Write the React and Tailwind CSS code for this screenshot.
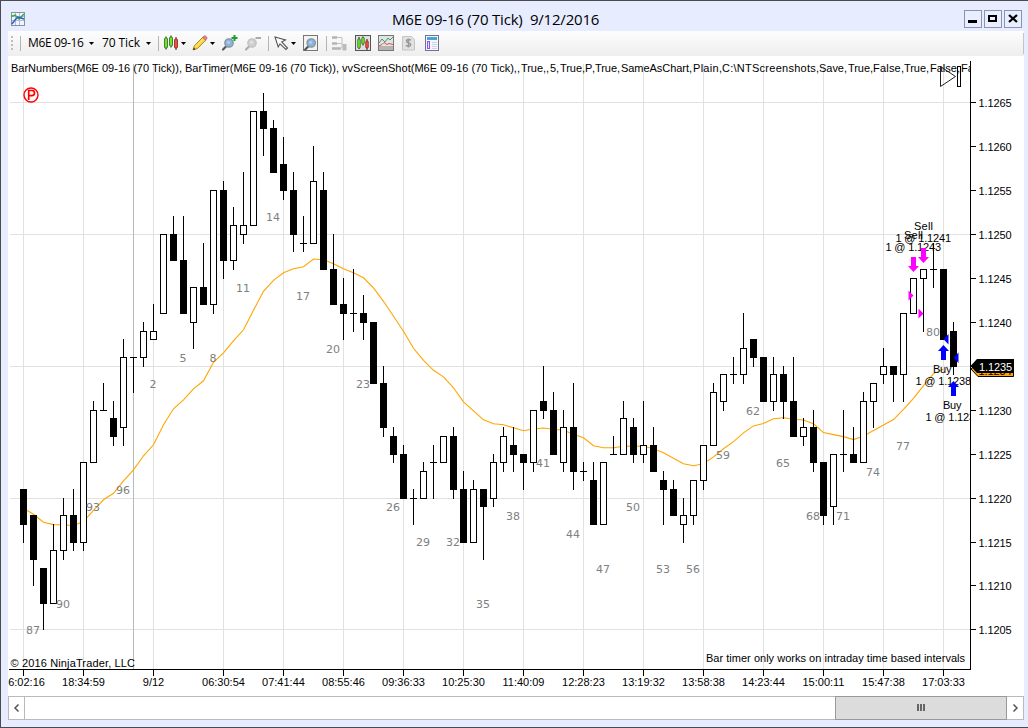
import React from "react";

const price = (t) => Math.round(102 + (65 - t) * 8.79);
const barX = (i) => 23 + i * 10;

// open, high, low, close in ticks above 1.1200
const BARS = [
  [21,21,15,17],[18,18,10,13],[12,12,5,8],[8,17,8,14],[14,20,13,18],[18,21,14,15],[15,24,14,24],[24,31,24,30],[30,33,30,30],[29,31,26,27],
  [28,38,26,36],[36,36,32,36],[36,40,35,39],[38,42,38,39],[41,50,41,50],[50,52,47,47],[47,52,41,41],[40,44,37,44],[44,49,42,42],[42,55,41,55],
  [55,56,45,47],[47,53,46,51],[50,57,49,51],[51,64,51,64],[64,66,59,62],[62,63,57,57],[58,61,54,55],[55,57,48,50],[49,52,48,49],[49,60,49,56],
  [55,57,46,46],[46,50,42,42],[42,45,38,41],[41,46,39,41],[41,43,38,40],[40,40,33,33],[33,35,27,28],[27,28,24,25],[25,26,20,20],[20,21,17,20],
  [20,24,20,23],[24,26,20,24],[24,27,24,27],[27,28,20,21],[21,23,15,15],[15,22,15,21],[21,21,13,19],[20,25,19,24],[24,28,23,27],[26,28,23,25],
  [25,25,21,24],[24,30,23,30],[31,35,29,30],[30,32,25,25],[24,30,23,28],[28,33,21,23],[23,24,22,23],[22,24,17,17],[17,24,17,24],[25,27,25,25],
  [25,31,25,29],[28,29,24,25],[25,31,24,26],[26,28,23,23],[22,23,17,21],[21,22,18,18],[17,20,15,18],[18,22,17,22],[22,26,21,26],[26,33,26,32],
  [31,34,30,34],[34,36,33,34],[34,41,33,37],[38,38,35,36],[36,36,31,31],[31,36,30,34],[34,35,29,31],[31,36,27,27],[27,29,26,28],[28,30,23,24],
  [24,24,17,18],[19,25,17,25],[25,30,23,25],[25,28,24,24],[24,32,24,31],[31,33,28,33],[34,37,33,35],[35,35,31,34],[34,41,31,41],[41,45,41,45],
  [45,46,39,46],[46,49,44,46],[46,46,38,38],[39,40,34,35],
];

const AVERAGE = [
  508, 514, 522, 524.3, 524.5, 525.5, 521, 510, 499.5, 493, 480.5, 469.5, 455.5, 444.5, 424.5, 408.5, 399.5, 388.5, 380.5, 362,
  352.5, 340.5, 329.5, 310, 291, 280, 272.5, 268.5, 266.5, 258.7, 259.5, 263.5, 268.5, 272.5, 277.5, 287.5, 301, 316, 331, 348,
  360, 370, 376.5, 387.5, 401.5, 410.5, 419.5, 423.5, 424.5, 427.5, 430.5, 428.7, 427.7, 429, 430, 434, 437.5, 445.5, 447.5, 447.5,
  446, 445.7, 446, 448.5, 452.5, 458, 463.5, 465.5, 463.5, 456.6, 448.5, 441.3, 432.6, 425.6, 423.3, 418.5, 417.5, 419, 419.7, 423.5,
  432.3, 434.3, 436.3, 439.3, 435.6, 430.3, 424.6, 419.3, 409, 398, 385.3, 373.3, 369,
];

const NUMBERS = [
  [87,33,634],[90,63,608],[93,93,511],[96,123,494],[2,153,388],[5,183,362],[8,213,362],[11,243,292],[14,273,221],[17,303,300],[20,333,353],
  [23,363,388],[26,393,511],[29,423,546],[32,453,546],[35,483,608],[38,513,520],[41,543,467],[44,573,538],[47,603,573],[50,633,511],[53,663,573],
  [56,693,573],[59,723,459],[62,753,415],[65,783,467],[68,813,520],[71,843,520],[74,873,476],[77,903,450],[80,933,336],
];

const TIMES = [
  [23,"16:02:16"],[83,"18:34:59"],[153,"9/12"],[223,"06:30:54"],[283,"07:41:44"],[343,"08:55:46"],[403,"09:36:33"],[463,"10:25:30"],
  [523,"11:40:09"],[583,"12:28:23"],[643,"13:19:32"],[703,"13:58:38"],[763,"14:23:44"],[823,"15:00:11"],[883,"15:47:38"],[943,"17:03:33"],
];

const HEADER = [
  [11,"BarNumbers(M6E 09-16 (70 Tick)),",171],[185,"BarTimer(M6E 09-16 (70 Tick)),",154],[342,"vvScreenShot(M6E 09-16 (70 Tick),,",178],
  [521,"True,,",28],[550,"5,",9],[560,"True,",25],[585,"P,",10],[595,"True,",25],[621,"SameAsChart,",71],[693,"Plain,",29],
  [722,"C:\\NTScreenshots,",97],[819,"Save,",28],[848,"True,",25],[873,"False,",31],[904,"True,",25],[930,"False,",30],[961,"False,",30],
];

const TICKS = [65, 60, 55, 50, 45, 40, 35, 30, 25, 20, 15, 10, 5];

function Candle({ i, bar }) {
  const [o, h, l, c] = bar;
  const x = barX(i);
  const top = price(Math.max(o, c));
  const bottom = price(Math.min(o, c));
  const hi = price(h);
  const lo = price(l);
  return (
    <g>
      <rect x={x} y={hi} width="1" height={lo - hi + 1} fill="#000" />
      {o > c && <rect x={x - 3} y={top} width="7" height={bottom - top + 1} fill="#000" />}
      {o < c && <rect x={x - 2.5} y={top + 0.5} width="6" height={bottom - top} fill="#fff" stroke="#000" />}
      {o === c && <rect x={x - 3} y={top} width="7" height="1" fill="#000" />}
    </g>
  );
}

const DownArrow = ({ x, y }) => (
  <path d={`M${x - 2} ${y}h5v9h3l-5.5 6l-5.5-6h3z`} fill="#f0f" />
);
const UpArrow = ({ x, y }) => (
  <path d={`M${x - 2} ${y + 15}h5v-9h3l-5.5-6l-5.5 6h3z`} fill="#00f" />
);

function Chart() {
  return (
    <svg viewBox="8 56 1016 640" width="1016" height="640" className="block shrink-0" fontFamily='"Liberation Sans", Arial, sans-serif' fontSize="11" fill="#000">
      <defs>
        <clipPath id="plot"><rect x="8" y="56" width="962" height="613" /></clipPath>
      </defs>
      <g fill="#e1e1e1">
        {TICKS.filter((t) => t % 15 === 5).map((t) => <rect key={t} x="10" y={price(t)} width="960" height="1" />)}
        {TIMES.map(([x]) => <rect key={x} x={x} y="64" width="1" height="605" />)}
      </g>
      <rect x="133" y="64" width="1" height="605" fill="#b9b9b9" />
      <g clipPath="url(#plot)">
        <polyline points={AVERAGE.map((y, i) => `${barX(i) + 0.5},${y + 0.3}`).join(" ")} fill="none" stroke="#ffa500" strokeWidth="1.1" />
        {BARS.map((b, i) => <Candle key={i} i={i} bar={b} />)}
        <g fontFamily='"DejaVu Sans", Verdana, sans-serif' fill="#808080" textAnchor="middle">
          {NUMBERS.map(([n, x, y]) => <text key={n} x={x} y={y}>{n}</text>)}
        </g>
        {HEADER.map(([x, s, w]) => <text key={x} x={x} y="72" textLength={w} lengthAdjust="spacing">{s}</text>)}
        <path d="M940.5 66.5V86.5L955.5 76.5Z" fill="none" stroke="#222" />
        <rect x="957.5" y="66.5" width="3" height="20" fill="none" stroke="#000" />
        <text x="914" y="230" textLength="19">Sell</text>
        <text x="895.5" y="242" textLength="55.5">1 @ 1.1241</text>
        <text x="904" y="239" textLength="19">Sell</text>
        <text x="885.5" y="251" textLength="55.5">1 @ 1.1243</text>
        <text x="933" y="373" textLength="18.5">Buy</text>
        <text x="915.5" y="385" textLength="55.5">1 @ 1.1238</text>
        <text x="943" y="409" textLength="18.5">Buy</text>
        <text x="925.5" y="421" textLength="55.5">1 @ 1.1236</text>
        <DownArrow x={913} y={257} />
        <DownArrow x={923} y={248} />
        <UpArrow x={943} y={345} />
        <UpArrow x={953} y={381} />
        <path d="M908.5 290.5v10l5-5zM918.5 308.5v10l5-5z" fill="#f0f" />
        <path d="M948.5 334v10.5l-5-5.2zM958.5 352.5v10.5l-5-5.2z" fill="#00f" />
      </g>
      <circle cx="31" cy="95" r="7" fill="none" stroke="#f00" strokeWidth="1.4" />
      <path d="M28.7 100V90.5h3.2a2.4 2.4 0 0 1 0 5.2H28.7" fill="none" stroke="#f00" strokeWidth="1.7" />
      <text x="10.5" y="667" textLength="124.5">© 2016 NinjaTrader, LLC</text>
      <text x="706" y="662" textLength="259">Bar timer only works on intraday time based intervals</text>
      <rect x="970" y="61" width="1" height="609" />
      <rect x="9" y="669" width="962" height="1" />
      {TICKS.map((t) => (
        <g key={t}>
          <rect x="971" y={price(t)} width="5" height="1" />
          <text x="978.5" y={price(t) + 5} textLength="33">{(1.12 + t / 10000).toFixed(4)}</text>
        </g>
      ))}
      {TIMES.map(([x, s]) => (
        <g key={x}>
          <rect x={x} y="670" width="1" height="6" />
          <text x={x + 0.5} y="686" textAnchor="middle">{s}</text>
        </g>
      ))}
      <path d="M971 369l7-6h35.5v13.5H978z" fill="#ffa500" stroke="#000" />
      <text x="978.5" y="375" textLength="33">1.1234</text>
      <path d="M970.5 366l6.5-7h37v14H977z" />
      <text x="979" y="370.5" textLength="33" fill="#fff">1.1235</text>
    </svg>
  );
}

const Caret = ({ className }) => (
  <svg viewBox="0 0 5 3" className={`h-[3px] w-[5px] shrink-0 ${className}`}><path d="M0 0h5L2.5 3z" /></svg>
);
const Divider = ({ className }) => <div className={`h-[15px] w-px shrink-0 bg-[#b4b4b4] ${className}`} />;
const Icon = ({ className, children }) => (
  <svg viewBox="0 0 16 16" className={`size-4 shrink-0 ${className}`}>{children}</svg>
);

const Lens = ({ rim = "#8c9299", glass = "#87b5df", handle = "#555" }) => (
  <g>
    <path d="M1 14.5L4.5 11" stroke={handle} strokeWidth="2.2" strokeLinecap="round" />
    <circle cx="7" cy="8" r="4.2" fill={glass} stroke={rim} strokeWidth="1.3" />
    <circle cx="6.5" cy="7.3" r="1.6" fill="#fff" fillOpacity="0.35" />
  </g>
);

const Sticks = () => (
  <g>
    <path d="M3 1.5v13M8 0.5v12M13 2v13" stroke="#222" />
    <rect x="1.5" y="3" width="3" height="10" rx="1" fill="#75e02e" stroke="#23691a" strokeWidth="0.8" />
    <rect x="6.5" y="2" width="3" height="9" rx="1" fill="#75e02e" stroke="#23691a" strokeWidth="0.8" />
    <rect x="11.5" y="4" width="3" height="9" rx="1" fill="#f05040" stroke="#8c2018" strokeWidth="0.8" />
  </g>
);

const SmallSticks = () => (
  <g>
    <path d="M4 2v12M8 1.5v9M12 4v11" stroke="#222" />
    <rect x="2.7" y="4" width="2.6" height="9" rx="0.8" fill="#75e02e" stroke="#23691a" strokeWidth="0.7" />
    <rect x="6.7" y="2.5" width="2.6" height="6.5" rx="0.8" fill="#75e02e" stroke="#23691a" strokeWidth="0.7" />
    <rect x="10.7" y="6" width="2.6" height="7" rx="0.8" fill="#f05040" stroke="#8c2018" strokeWidth="0.7" />
  </g>
);

function Toolbar() {
  return (
    <div className="flex h-[25px] shrink-0 items-center bg-linear-to-b from-[#fdfdfd] to-[#eeeeee] pb-px font-['Open_Sans',sans-serif] text-[12px] leading-4 text-black">
      <div className="ml-[3px] flex w-[2px] shrink-0 flex-col gap-[2px]">
        <i className="h-[2px] bg-[#bdbdbd]" /><i className="h-[2px] bg-[#bdbdbd]" /><i className="h-[2px] bg-[#bdbdbd]" /><i className="h-[2px] bg-[#bdbdbd]" />
      </div>
      <Divider className="ml-[7px]" />
      <span className="ml-[7px] w-[57px] shrink-0 whitespace-nowrap tracking-[-0.35px]">M6E 09-16</span>
      <Caret className="ml-[4px]" />
      <span className="ml-[8px] w-[39px] shrink-0 whitespace-nowrap tracking-[-0.1px]">70 Tick</span>
      <Caret className="ml-[5px]" />
      <Divider className="ml-[7px]" />
      <Icon className="ml-[4px]"><Sticks /></Icon>
      <Caret className="ml-[2px]" />
      <Icon className="ml-[6px]">
        <path d="M1 15l1.5-4.5L11 2l3 3-8.5 8.5z" fill="#f7d438" stroke="#a8801c" strokeWidth="0.9" />
        <path d="M10.5 2.5l1.5-1.3q1-.8 2 .2l.6.6q.9 1 0 1.9L13.5 5z" fill="#ee8888" stroke="#a45252" strokeWidth="0.7" />
        <path d="M3.5 12L11.5 4" stroke="#fff2a0" />
        <path d="M1 15l.8-2.5 1.7 1.7z" fill="#333" />
      </Icon>
      <Caret className="ml-[2px]" />
      <Icon className="ml-[7px]"><Lens /><path d="M12.5 0v6M9.5 3h6" stroke="#18a030" strokeWidth="2" /></Icon>
      <Icon className="ml-[7px]"><Lens rim="#c2c2c2" glass="#cfcfcf" handle="#aaa" /><path d="M10.5 3h5.5" stroke="#aaa" strokeWidth="2" /></Icon>
      <Divider className="ml-[7px]" />
      <Icon className="ml-[5px]">
        <path d="M1 2l10.5 3-3.8 2L13.5 13l-1.5 1.5L6 8.8 4.2 12z" fill="#fff" stroke="#555" strokeWidth="1.1" />
      </Icon>
      <Caret className="ml-[1px]" />
      <Icon className="ml-[7px]">
        <rect x="0.5" y="0.5" width="14" height="15" fill="#f3f3f3" stroke="#777" />
        <g transform="translate(1.2 0)"><Lens /></g>
      </Icon>
      <Divider className="ml-[7px]" />
      <Icon className="ml-[4px]">
        <path d="M1 2.5h5M1 8.5h5M1 13.5h9" stroke="#b4b4b4" strokeWidth="2.5" />
        <path d="M6 2.5h5v11M6 8.5h5" stroke="#c2c2c2" fill="none" />
        <rect x="11.5" y="9" width="4" height="6.5" fill="#bbb" />
      </Icon>
      <Icon className="ml-[8px]">
        <rect x="0.5" y="0.5" width="15" height="15" fill="#e0e0e0" stroke="#555" />
        <SmallSticks />
      </Icon>
      <Icon className="ml-[7px]">
        <rect x="0.5" y="0.5" width="15" height="15" fill="#e3e3e3" stroke="#777" />
        <rect x="1" y="11" width="14" height="4" fill="#b4b4b4" />
        <path d="M1 8l3-4 3 3 3-4 2 2 3-3" fill="none" stroke="#30a36b" />
        <path d="M1 11l3-1.5 2-2 3 2 2-1 4 1" fill="none" stroke="#e25050" />
      </Icon>
      <Icon className="ml-[7px]">
        <path d="M1.5 1.5h9l3 3v10.5h-12z" fill="#e2e2e2" stroke="#c4c4c4" />
        <path d="M10 5.3q-1-1-2.5-.8-2 .2-1.9 1.7.1 1.2 1.9 1.6 2.1.4 2.2 1.9-.1 1.5-2.2 1.6-1.7 0-2.5-1M7.5 3.5v9" fill="none" stroke="#999" strokeWidth="1.5" />
      </Icon>
      <Icon className="ml-[7px]">
        <rect x="1.5" y="0.5" width="13" height="15" fill="#f6f6ff" stroke="#6e7486" />
        <rect x="3" y="2" width="10" height="3" fill="#4aa3d9" />
        <rect x="3.5" y="6.5" width="2" height="7" fill="#eadcff" stroke="#8c52f0" />
        <path d="M8 7.5h5M8 9.5h5M8 11.5h5M8 13.5h5" stroke="#cfd2e6" />
      </Icon>
      <div className="ml-auto h-[21px] w-px bg-[#c4c4c4]" />
    </div>
  );
}

const WindowButton = ({ children }) => (
  <button className="flex size-[18px] items-center justify-center border border-[#8a93b3] bg-[#e9effe]">
    <svg viewBox="0 0 16 16" className="size-4 shrink-0">{children}</svg>
  </button>
);

function TitleBar() {
  return (
    <div className="flex h-[30px] shrink-0 items-center">
      <svg viewBox="0 0 14 14" className="ml-[3px] mt-[6px] size-[14px] shrink-0">
        <rect x="0.5" y="0.5" width="13" height="13" fill="#f1f4fa" stroke="#8790a5" />
        <path d="M4.5 1v12M8.5 1v12M1 4.5h12M1 8.5h12" stroke="#b4bccb" />
        <path d="M0 4.5L4 3l4 4 5-5" fill="none" stroke="#35ad2d" strokeWidth="1.5" />
        <path d="M1 12l3-4 3-3 3 1 3 1" fill="none" stroke="#2860d0" strokeWidth="1.5" />
      </svg>
      <h1 className="ml-[367px] mt-[6px] whitespace-pre font-['Open_Sans',sans-serif] text-[15px] leading-5 tracking-[-0.2px] text-black">M6E 09-16 (70 Tick)  9/12/2016</h1>
      <div className="ml-auto mr-[2px] mt-[6px] flex gap-[2px]">
        <WindowButton><rect x="3" y="9" width="9" height="3" /></WindowButton>
        <WindowButton><rect x="4" y="5" width="7" height="5" fill="none" stroke="#000" strokeWidth="2" /></WindowButton>
        <WindowButton><path d="M4 4l8 7M12 4L4 11" stroke="#000" strokeWidth="2.3" /></WindowButton>
      </div>
    </div>
  );
}

function ScrollBar() {
  return (
    <div className="flex h-[24px] shrink-0 border border-[#b9b9b9] bg-white">
      <div className="flex w-4 items-center justify-center border-r border-[#b9b9b9] pb-px">
        <svg viewBox="0 0 8 8" className="size-2"><path d="M5.5 .5L2 4l3.5 3.5" fill="none" stroke="#555" strokeWidth="1.5" /></svg>
      </div>
      <div className="flex-1" />
      <div className="-my-px flex w-[172px] items-center justify-center gap-px border border-[#999] bg-[#dcdcdc] pb-[2px] pr-px">
        <i className="h-[7px] w-[2px] bg-[#666]" /><i className="h-[7px] w-[2px] bg-[#666]" /><i className="h-[7px] w-[2px] bg-[#666]" />
      </div>
      <div className="flex w-[16px] items-center justify-center pb-px">
        <svg viewBox="0 0 8 8" className="size-2"><path d="M2.5 .5L6 4 2.5 7.5" fill="none" stroke="#555" strokeWidth="1.5" /></svg>
      </div>
    </div>
  );
}

export default function App() {
  return (
    <div className="flex h-[728px] w-[1028px] flex-col overflow-hidden border-y border-l border-[#4b4a50] bg-[#e7edfe] pl-[7px] pr-[4px]">
      <TitleBar />
      <Toolbar />
      <div className="shrink-0 bg-white"><Chart /></div>
      <ScrollBar />
    </div>
  );
}
